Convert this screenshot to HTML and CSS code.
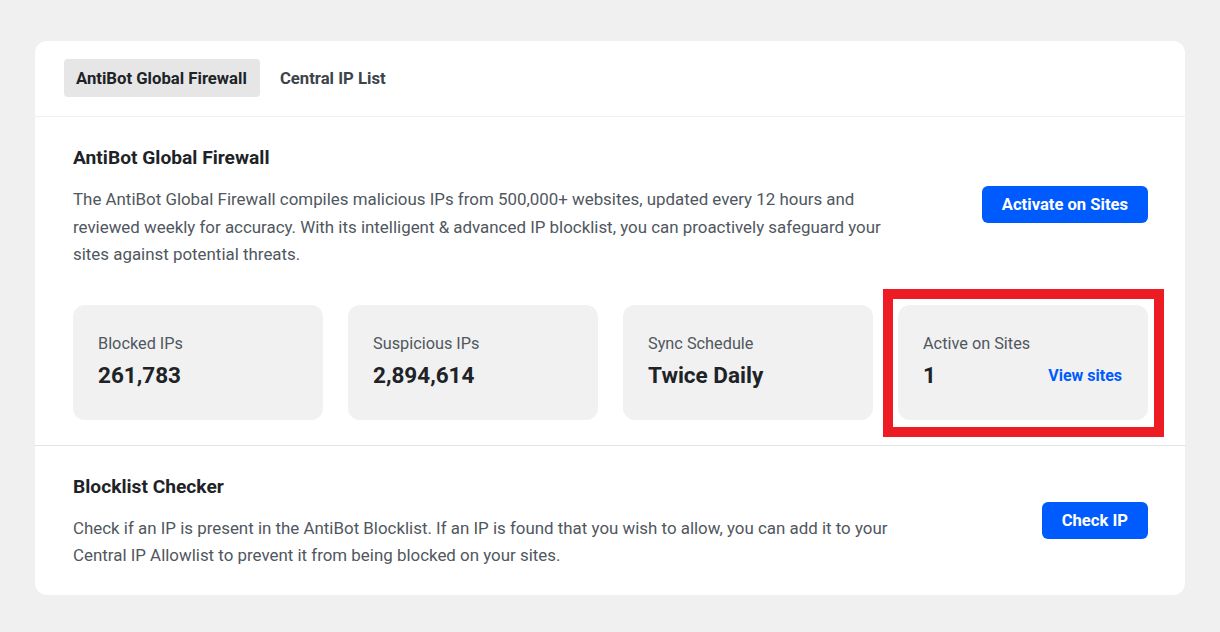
FILE: index.html
```html
<!DOCTYPE html>
<html lang="en">
<head>
<meta charset="utf-8">
<title>AntiBot Global Firewall</title>
<link rel="stylesheet" href="styles.css">
</head>
<body>
<div class="panel">
  <div class="tabs">
    <button class="tab tab-active">AntiBot Global Firewall</button>
    <button class="tab">Central IP List</button>
  </div>

  <section class="section section-firewall">
    <div class="row">
      <div class="text">
        <h2 class="title">AntiBot Global Firewall</h2>
        <p class="desc">The AntiBot Global Firewall compiles malicious IPs from 500,000+ websites, updated every 12 hours and reviewed weekly for accuracy. With its intelligent &amp; advanced IP blocklist, you can proactively safeguard your sites against potential threats.</p>
      </div>
      <button class="btn">Activate on Sites</button>
    </div>

    <div class="stats">
      <div class="stat">
        <div class="stat-label">Blocked IPs</div>
        <div class="stat-value">261,783</div>
      </div>
      <div class="stat">
        <div class="stat-label">Suspicious IPs</div>
        <div class="stat-value">2,894,614</div>
      </div>
      <div class="stat">
        <div class="stat-label">Sync Schedule</div>
        <div class="stat-value">Twice Daily</div>
      </div>
      <div class="stat stat-highlight">
        <div class="stat-label">Active on Sites</div>
        <div class="stat-row">
          <div class="stat-value">1</div>
          <a class="stat-link" href="#">View sites</a>
        </div>
        <div class="highlight-box"></div>
      </div>
    </div>
  </section>

  <section class="section section-checker">
    <div class="row">
      <div class="text">
        <h2 class="title">Blocklist Checker</h2>
        <p class="desc">Check if an IP is present in the AntiBot Blocklist. If an IP is found that you wish to allow, you can add it to your Central IP Allowlist to prevent it from being blocked on your sites.</p>
      </div>
      <button class="btn">Check IP</button>
    </div>
  </section>
</div>
</body>
</html>
```

FILE: styles.css
```css
* { box-sizing: border-box; }

html, body {
  margin: 0;
  padding: 0;
}

body {
  background: #f0f0f0;
  font-family: Roboto, "Liberation Sans", Arial, sans-serif;
  color: #1d2327;
  padding: 41px 35px 0 35px;
  width: 1220px;
  height: 632px;
  overflow: hidden;
}

.panel {
  background: #ffffff;
  border-radius: 12px;
  width: 1150px;
}

.tabs {
  display: flex;
  gap: 8px;
  padding: 18px 29px 19px 29px;
  border-bottom: 1px solid #f0f0f0;
}

.tab {
  font-family: inherit;
  font-size: 16.7px;
  font-weight: 700;
  color: #3c434a;
  background: transparent;
  border: none;
  border-radius: 4px;
  height: 38px;
  padding: 0 12px 0 12px;
  cursor: pointer;
}

.tab-active {
  background: #e6e6e6;
  color: #1d2327;
  padding-right: 13px;
}

.section {
  padding: 29px 37px 25px 38px;
}

.section-firewall {
  border-bottom: 1px solid #e3e3e3;
}

.row {
  display: flex;
  align-items: center;
  justify-content: space-between;
}

.text {
  max-width: 840px;
}

.title {
  margin: 0;
  font-size: 19.2px;
  line-height: 24px;
  font-weight: 700;
  color: #1d2327;
}

.desc {
  margin: 16px 0 0 0;
  font-size: 16.9px;
  line-height: 27.5px;
  color: #50575e;
}

.btn {
  font-family: inherit;
  font-size: 16.6px;
  font-weight: 700;
  color: #ffffff;
  background: #005bff;
  border: none;
  border-radius: 6px;
  height: 37px;
  padding: 0 20px;
  cursor: pointer;
  flex-shrink: 0;
}

.section-firewall .btn {
  margin-top: -6px;
}

.section-checker .btn {
  margin-top: -3px;
}

.stats {
  display: grid;
  grid-template-columns: repeat(4, 250px);
  gap: 25px;
  margin-top: 36px;
}

.stat {
  background: #f1f1f1;
  border-radius: 12px;
  height: 115px;
  padding: 28px 26px 0 25px;
  display: flex;
  flex-direction: column;
}

.stat-label {
  font-size: 16.3px;
  line-height: 22px;
  color: #50575e;
}

.stat-value {
  font-size: 22.5px;
  line-height: 30px;
  font-weight: 700;
  color: #1d2327;
  margin-top: 5px;
}

.stat-row {
  display: flex;
  align-items: center;
  justify-content: space-between;
}

.stat-link {
  font-size: 16px;
  font-weight: 700;
  color: #005bff;
  text-decoration: none;
  margin-top: 7px;
}

.stat-highlight {
  position: relative;
}

.highlight-box {
  position: absolute;
  left: -15px;
  top: -16px;
  width: 281px;
  height: 148px;
  border: 10px solid #ed1c24;
  pointer-events: none;
}
```
